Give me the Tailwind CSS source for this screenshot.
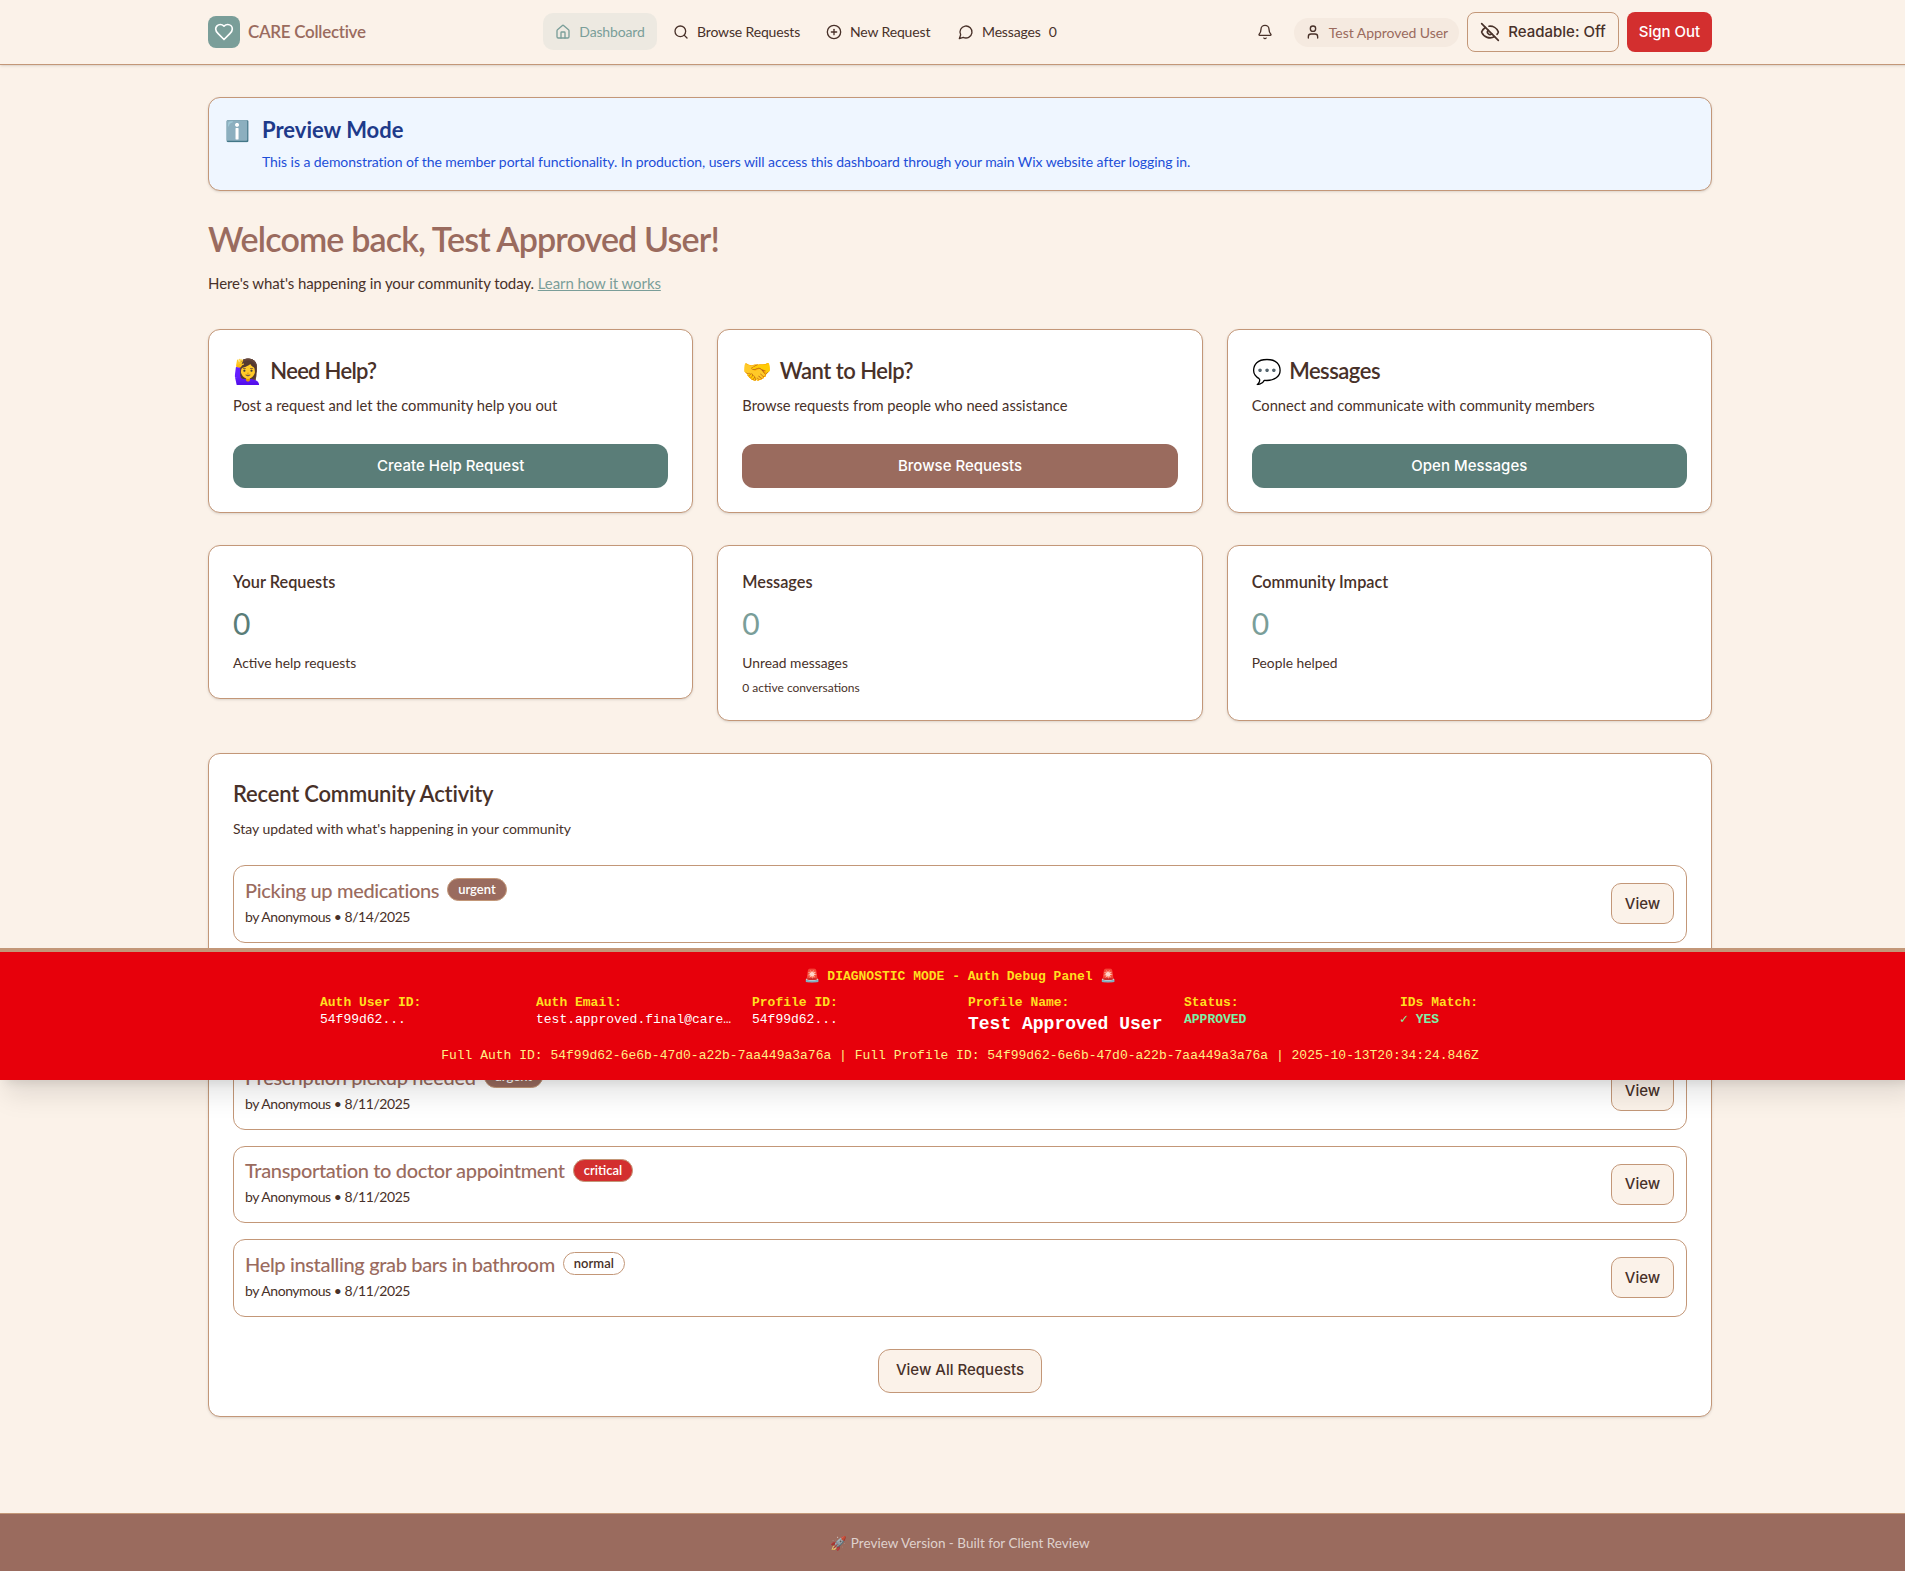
<!DOCTYPE html>
<html lang="en"><head><meta charset="utf-8"><title>CARE Collective</title>
<script src="https://cdn.jsdelivr.net/npm/@tailwindcss/browser@4"></script></head>
<body class="m-0 overflow-hidden bg-[#FBF2E9]">
<div class="relative w-[1920px] h-[1571px] overflow-hidden bg-[#FBF2E9] text-[#483129] font-['Lato',sans-serif]">
<header class="h-[65px] border-b border-[#C39778] shadow-sm">
 <div class="w-[1504px] mx-auto h-[64px] flex items-center">
  <div class="flex items-center w-[335px] gap-2">
   <div class="w-8 h-8 rounded-lg bg-[#7A9E99] flex items-center justify-center"><svg class="w-5 h-5" viewBox="0 0 24 24" fill="none" stroke="#fff" stroke-width="2" stroke-linecap="round" stroke-linejoin="round"><path d="M19 14c1.49-1.46 3-3.21 3-5.5A5.5 5.5 0 0 0 16.5 3c-1.76 0-3 .5-4.5 2-1.5-1.5-2.74-2-4.5-2A5.5 5.5 0 0 0 2 8.5c0 2.3 1.5 4.05 3 5.5l7 7Z"/></svg></div>
   <span class="text-[17px] font-semibold text-[#9A6B5E] tracking-[-0.3px]">CARE Collective</span>
  </div>
  <nav class="flex items-center text-[14px] whitespace-nowrap tracking-[-0.15px] pb-[1px]">
   <a class="h-[37px] w-[114px] rounded-[10px] bg-[#7A9E99]/10 text-[#7A9E99] flex items-center justify-center gap-2"><svg class="w-4 h-4" viewBox="0 0 24 24" fill="none" stroke="currentColor" stroke-width="2" stroke-linecap="round" stroke-linejoin="round"><path d="M15 21v-8a1 1 0 0 0-1-1h-4a1 1 0 0 0-1 1v8"/><path d="M3 10a2 2 0 0 1 .709-1.528l7-5.999a2 2 0 0 1 2.582 0l7 5.999A2 2 0 0 1 21 10v9a2 2 0 0 1-2 2H5a2 2 0 0 1-2-2z"/></svg>Dashboard</a>
   <a class="h-[37px] ml-[16px] w-[125px] flex items-center gap-2"><svg class="w-4 h-4 shrink-0" viewBox="0 0 24 24" fill="none" stroke="currentColor" stroke-width="2" stroke-linecap="round" stroke-linejoin="round"><circle cx="11" cy="11" r="8"/><path d="m21 21-4.3-4.3"/></svg>Browse Requests</a>
   <a class="h-[37px] ml-[28px] w-[103px] flex items-center gap-2"><svg class="w-4 h-4 shrink-0" viewBox="0 0 24 24" fill="none" stroke="currentColor" stroke-width="2" stroke-linecap="round" stroke-linejoin="round"><circle cx="12" cy="12" r="10"/><path d="M8 12h8"/><path d="M12 8v8"/></svg>New Request</a>
   <a class="h-[37px] ml-[29px] flex items-center gap-2"><svg class="w-4 h-4 shrink-0" viewBox="0 0 24 24" fill="none" stroke="currentColor" stroke-width="2" stroke-linecap="round" stroke-linejoin="round"><path d="M7.9 20A9 9 0 1 0 4 16.1L2 22Z"/></svg><span>Messages</span><span>0</span></a>
  </nav>
  <div class="ml-auto flex items-center">
   <svg class="w-4 h-4" viewBox="0 0 24 24" fill="none" stroke="currentColor" stroke-width="2" stroke-linecap="round" stroke-linejoin="round"><path d="M10.268 21a2 2 0 0 0 3.464 0"/><path d="M3.262 15.326A1 1 0 0 0 4 17h16a1 1 0 0 0 .74-1.673C19.41 13.956 18 12.499 18 8A6 6 0 0 0 6 8c0 4.499-1.411 5.956-2.738 7.326"/></svg>
   <div class="ml-[21px] w-[165px] h-[29px] rounded-full bg-[#F5EAE0] text-[#9A6B5E] text-[14px] tracking-[-0.05px] flex items-center justify-center gap-2"><svg class="w-4 h-4 text-[#483129]" viewBox="0 0 24 24" fill="none" stroke="currentColor" stroke-width="2" stroke-linecap="round" stroke-linejoin="round"><path d="M19 21v-2a4 4 0 0 0-4-4H9a4 4 0 0 0-4 4v2"/><circle cx="12" cy="7" r="4"/></svg>Test Approved User</div>
   <button class="ml-2 w-[152px] h-10 rounded-lg border border-[#C39778] text-[15px] font-medium font-['Inter',sans-serif] flex items-center justify-center gap-2"><svg class="w-5 h-5" viewBox="0 0 24 24" fill="none" stroke="currentColor" stroke-width="2" stroke-linecap="round" stroke-linejoin="round"><path d="M10.733 5.076a10.744 10.744 0 0 1 11.205 6.575 1 1 0 0 1 0 .696 10.747 10.747 0 0 1-1.444 2.49"/><path d="M14.084 14.158a3 3 0 0 1-4.242-4.242"/><path d="M17.479 17.499a10.75 10.75 0 0 1-15.417-5.151 1 1 0 0 1 0-.696 10.75 10.75 0 0 1 4.446-5.143"/><path d="m2 2 20 20"/></svg>Readable: Off</button>
   <button class="ml-2 w-[85px] h-10 rounded-lg bg-[#D32F2F] text-white text-[15px] font-medium font-['Inter',sans-serif]">Sign Out</button>
  </div>
 </div>
</header>
<main class="w-[1504px] mx-auto pt-8">
 <section class="h-[94px] rounded-xl border border-[#C39778] shadow-sm bg-[#EFF6FF] pl-[16px] pt-[16px] flex gap-3">
  <span class="text-[20px] leading-[32px]">ℹ️</span>
  <div><h3 class="text-[22px] leading-[32px] font-bold text-[#1E3A8A]">Preview Mode</h3><p class="text-[14px] leading-[20px] mt-[6px] text-[#1D4ED8] tracking-[-0.07px]">This is a demonstration of the member portal functionality. In production, users will access this dashboard through your main Wix website after logging in.</p></div>
 </section>
 <h1 class="mt-[25px] text-[34px] leading-[46px] font-semibold text-[#9A6B5E] tracking-[-0.85px]">Welcome back, Test Approved User!</h1>
 <p class="mt-[9px] text-[15px] leading-[24px] tracking-[-0.08px]">Here's what's happening in your community today. <a class="text-[#7A9E99] underline">Learn how it works</a></p>
 <div class="mt-[34px] grid grid-cols-3 gap-6">
  <div class="h-[184px] rounded-xl bg-white border border-[#C39778] shadow-sm p-6"><h3 class="text-[22px] leading-[34px] font-semibold tracking-[-0.7px] flex gap-2 items-center"><span class="text-[24px]">🙋‍♀️</span>Need Help?</h3><p class="mt-[5px] text-[14.7px] leading-[24px]">Post a request and let the community help you out</p><button class="mt-[27px] w-full h-11 rounded-xl bg-[#5A7D78] text-white text-[15px] font-medium font-['Inter',sans-serif]">Create Help Request</button></div>
  <div class="h-[184px] rounded-xl bg-white border border-[#C39778] shadow-sm p-6"><h3 class="text-[22px] leading-[34px] font-semibold tracking-[-0.5px] flex gap-2 items-center"><span class="text-[24px]">🤝</span>Want to Help?</h3><p class="mt-[5px] text-[14.7px] leading-[24px]">Browse requests from people who need assistance</p><button class="mt-[27px] w-full h-11 rounded-xl bg-[#9A6B5E] text-white text-[15px] font-medium font-['Inter',sans-serif]">Browse Requests</button></div>
  <div class="h-[184px] rounded-xl bg-white border border-[#C39778] shadow-sm p-6"><h3 class="text-[22px] leading-[34px] font-semibold tracking-[-0.5px] flex gap-2 items-center"><span class="text-[24px]">💬</span>Messages</h3><p class="mt-[5px] text-[14.7px] leading-[24px]">Connect and communicate with community members</p><button class="mt-[27px] w-full h-11 rounded-xl bg-[#5A7D78] text-white text-[15px] font-medium font-['Inter',sans-serif]">Open Messages</button></div>
 </div>
 <div class="mt-8 grid grid-cols-3 gap-6">
  <div class="self-start h-[154px] rounded-xl bg-white border border-[#C39778] shadow-sm px-6 pt-[23px]"><h4 class="text-[16.3px] leading-[26px] font-semibold">Your Requests</h4><div class="mt-[8px] text-[30px] leading-[40px] text-[#5A7D78]">0</div><p class="mt-[8px] text-[13.8px] leading-[24px]">Active help requests</p></div>
  <div class="h-[176px] rounded-xl bg-white border border-[#C39778] shadow-sm px-6 pt-[23px]"><h4 class="text-[16.3px] leading-[26px] font-semibold">Messages</h4><div class="mt-[8px] text-[30px] leading-[40px] text-[#7A9E99]">0</div><p class="mt-[8px] text-[13.8px] leading-[24px]">Unread messages</p><p class="mt-[3px] text-[12px] leading-[20px]">0 active conversations</p></div>
  <div class="h-[176px] rounded-xl bg-white border border-[#C39778] shadow-sm px-6 pt-[23px]"><h4 class="text-[16.3px] leading-[26px] font-semibold">Community Impact</h4><div class="mt-[8px] text-[30px] leading-[40px] text-[#7A9E99]">0</div><p class="mt-[8px] text-[13.8px] leading-[24px]">People helped</p></div>
 </div>
 <section class="mt-8 h-[664px] rounded-xl bg-white border border-[#C39778] shadow-sm px-6 pt-[24px]">
  <h2 class="text-[22px] leading-[32px] font-semibold tracking-[-0.2px]">Recent Community Activity</h2>
  <p class="mt-[7px] text-[14px] leading-[24px] tracking-[-0.02px]">Stay updated with what's happening in your community</p>
  <div class="mt-[24px] flex flex-col gap-4">
   <div class="h-[77.5px] rounded-xl border border-[#C39778] pl-[11px] pr-3 flex items-center justify-between"><div class="pb-[5px]"><div class="flex items-center gap-2"><span class="text-[20px] leading-[28px] text-[#9A6B5E] font-medium tracking-[-0.35px]">Picking up medications</span><span class="rounded-full bg-[#9A6B5E] border border-[#C39778] text-white text-[13px] leading-[21px] font-semibold px-[10px]">urgent</span></div><p class="text-[14px] leading-[20px] mt-[3px] tracking-[-0.45px]">by Anonymous • 8/14/2025</p></div><button class="w-[63px] h-[41px] rounded-[10px] bg-[#FBF2E9] border border-[#C39778] text-[15px] font-medium font-['Inter',sans-serif]">View</button></div>
   <div class="h-[77.5px] rounded-xl border border-[#C39778]"></div>
   <div class="h-[77.5px] rounded-xl border border-[#C39778] pl-[11px] pr-3 flex items-center justify-between"><div class="pb-[5px]"><div class="flex items-center gap-2"><span class="text-[20px] leading-[28px] text-[#9A6B5E] font-medium tracking-[-0.35px]">Prescription pickup needed</span><span class="rounded-full bg-[#9A6B5E] border border-[#C39778] text-white text-[13px] leading-[21px] font-semibold px-[10px]">urgent</span></div><p class="text-[14px] leading-[20px] mt-[3px] tracking-[-0.45px]">by Anonymous • 8/11/2025</p></div><button class="w-[63px] h-[41px] rounded-[10px] bg-[#FBF2E9] border border-[#C39778] text-[15px] font-medium font-['Inter',sans-serif]">View</button></div>
   <div class="h-[77.5px] rounded-xl border border-[#C39778] pl-[11px] pr-3 flex items-center justify-between"><div class="pb-[5px]"><div class="flex items-center gap-2"><span class="text-[20px] leading-[28px] text-[#9A6B5E] font-medium tracking-[-0.35px]">Transportation to doctor appointment</span><span class="rounded-full bg-[#D32F2F] border border-[#C39778] text-white text-[13px] leading-[21px] font-semibold px-[10px]">critical</span></div><p class="text-[14px] leading-[20px] mt-[3px] tracking-[-0.45px]">by Anonymous • 8/11/2025</p></div><button class="w-[63px] h-[41px] rounded-[10px] bg-[#FBF2E9] border border-[#C39778] text-[15px] font-medium font-['Inter',sans-serif]">View</button></div>
   <div class="h-[77.5px] rounded-xl border border-[#C39778] pl-[11px] pr-3 flex items-center justify-between"><div class="pb-[5px]"><div class="flex items-center gap-2"><span class="text-[20px] leading-[28px] text-[#9A6B5E] font-medium tracking-[-0.35px]">Help installing grab bars in bathroom</span><span class="rounded-full bg-white border border-[#C39778] text-[13px] leading-[21px] font-semibold px-[10px]">normal</span></div><p class="text-[14px] leading-[20px] mt-[3px] tracking-[-0.45px]">by Anonymous • 8/11/2025</p></div><button class="w-[63px] h-[41px] rounded-[10px] bg-[#FBF2E9] border border-[#C39778] text-[15px] font-medium font-['Inter',sans-serif]">View</button></div>
  </div>
  <div class="mt-8 flex justify-center"><button class="w-[164px] h-[44px] rounded-xl bg-[#FBF2E9] border border-[#C39778] text-[15px] font-medium font-['Inter',sans-serif]">View All Requests</button></div>
 </section>
</main>
<footer class="absolute left-0 right-0 bottom-0 h-[58px] pt-[1px] bg-[#9A6B5E] border-t border-[#C39778] flex items-center justify-center text-[13.5px] text-white/70">🚀 Preview Version - Built for Client Review</footer>
<div class="absolute left-0 right-0 top-[948px] h-[132px] bg-[#E7000B] border-t-4 border-[#C39778] shadow-xl font-['Liberation_Mono',monospace] text-[13px] text-white">
 <div class="pt-[17px] text-center font-bold text-[#FFDF20] leading-4">🚨 DIAGNOSTIC MODE - Auth Debug Panel 🚨</div>
 <div class="mx-auto w-[1280px] mt-[9px] grid grid-cols-6 gap-4 leading-[17px]">
  <div><div class="font-bold text-[#FFDF20]">Auth User ID:</div><div>54f99d62...</div></div>
  <div class="min-w-0"><div class="font-bold text-[#FFDF20]">Auth Email:</div><div class="truncate">test.approved.final@care.test</div></div>
  <div><div class="font-bold text-[#FFDF20]">Profile ID:</div><div>54f99d62...</div></div>
  <div class="whitespace-nowrap"><div class="font-bold text-[#FFDF20]">Profile Name:</div><div class="font-bold text-[18px] leading-[26px]">Test Approved User</div></div>
  <div><div class="font-bold text-[#FFDF20]">Status:</div><div class="font-bold text-[#7BF1A8]">APPROVED</div></div>
  <div><div class="font-bold text-[#FFDF20]">IDs Match:</div><div class="font-bold text-[#7BF1A8]">✓ YES</div></div>
 </div>
 <div class="mt-[11px] text-center text-[#FFF085] leading-4">Full Auth ID: 54f99d62-6e6b-47d0-a22b-7aa449a3a76a | Full Profile ID: 54f99d62-6e6b-47d0-a22b-7aa449a3a76a | 2025-10-13T20:34:24.846Z</div>
</div>
</div>
</body></html>
